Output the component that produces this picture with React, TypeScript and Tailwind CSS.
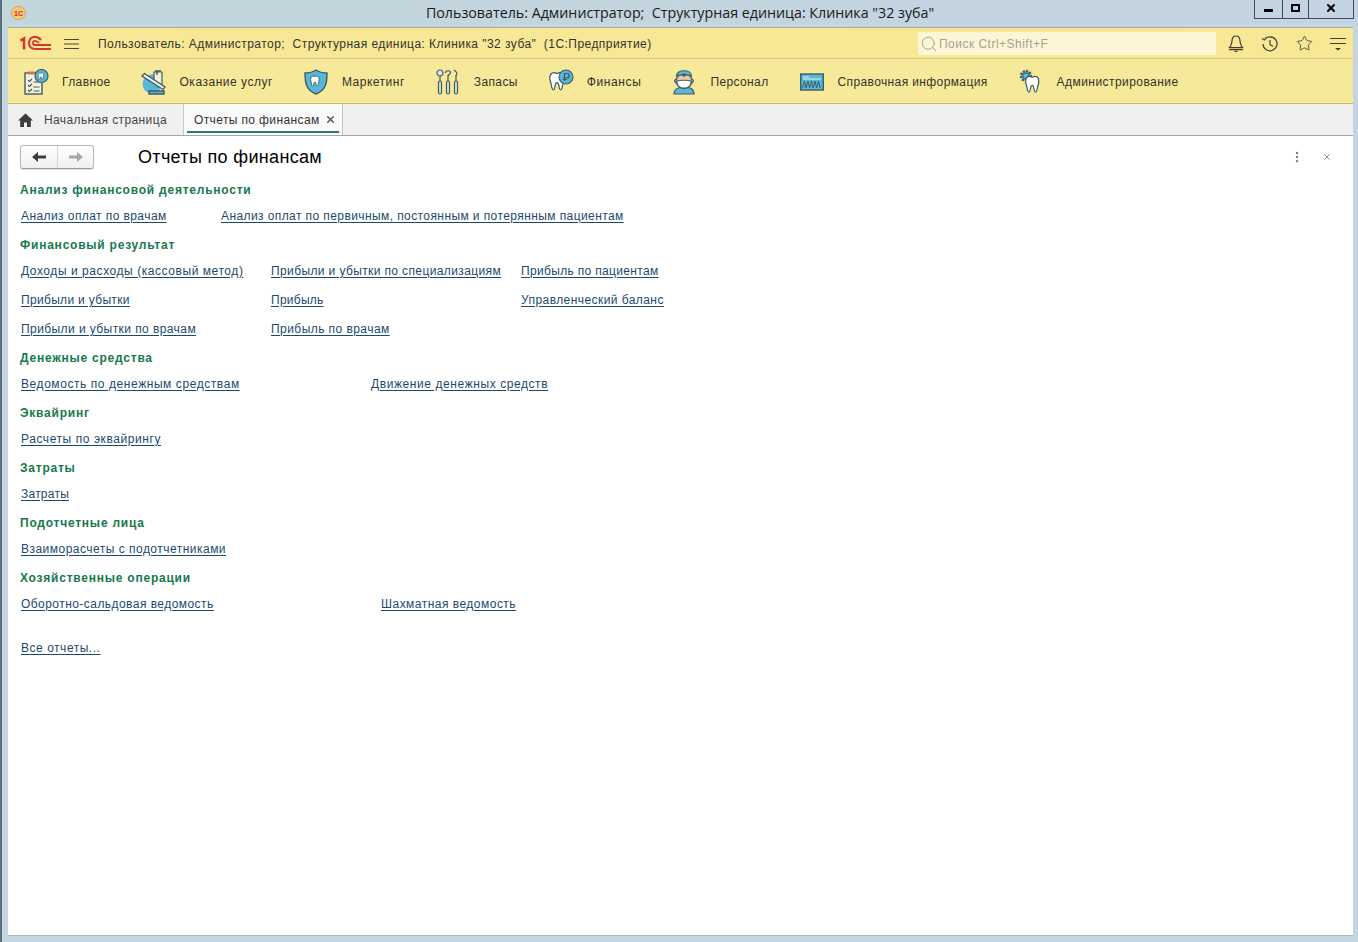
import React from 'react';
import { MoreVertical, Search, Star, X } from 'lucide-react';

const TOOTH =
  'M7 3c-3 0-5 2-5 6 0 3 1 4 1.500 7 .4 2.500 1 6 2.500 6s1.500-3 2-5c.3-1.500 1-3 2-3s1.700 1.500 2 3c.5 2 .5 5 2 5s2.100-3.500 2.500-6c.5-3 1.500-4 1.500-7 0-4-2-6-5-6-1.500 0-2 .8-3 .8S8.500 3 7 3z';
const DARK = '#3f5c63';
const BLUE = '#58b7d6';

const MainIcon = () => (
  <svg width="26" height="26" viewBox="0 0 26 26" fill="none">
    <rect x="2" y="4" width="17" height="21" fill="#f6f1dc" stroke={DARK} strokeWidth="1.400" />
    <rect x="5" y="2.500" width="7" height="3" fill="#c9736b" />
    <path d="M5 11l1.500 1.500L9 10M5 16l1.500 1.500L9 15M5 21l1.500 1.500L9 20" stroke={DARK} strokeWidth="1.100" />
    <path d="M10.500 13h6M10.500 18h6M10.500 22h6" stroke={DARK} strokeWidth="1.200" />
    <circle cx="18.500" cy="7" r="6.500" fill={BLUE} stroke={DARK} strokeWidth="1.200" />
    <path d={TOOTH} transform="translate(14.500 3) scale(.34)" fill="#fff" stroke={DARK} strokeWidth="2" />
  </svg>
);

const ChairIcon = () => (
  <svg width="26" height="26" viewBox="0 0 26 26" fill="none">
    <circle cx="11" cy="15" r="9.500" fill={BLUE} />
    <path d="M13 3h8v15l-4 0-4-8z" fill="#f4f0dc" stroke={DARK} strokeWidth="1.200" />
    <path d="M14 2h6M16 2v4" stroke={DARK} strokeWidth="1.400" />
    <path d="M1 7l2.500-2.500L24 18l-2 2.500z" fill="#eaf1ea" stroke={DARK} strokeWidth="1.300" />
    <path d="M8 22h15v3H8z" fill={BLUE} stroke={DARK} strokeWidth="1.400" />
  </svg>
);

const ShieldIcon = () => (
  <svg width="24" height="26" viewBox="0 0 24 26" fill="none">
    <path d="M12 1c3 2 6 3 11 3 0 10-1 17-11 21C2 21 1 14 1 4c5 0 8-1 11-3z" fill={BLUE} stroke={DARK} strokeWidth="1.400" />
    <path d={TOOTH} transform="translate(5.500 5.500) scale(.54)" fill="#fff" stroke={DARK} strokeWidth="1.800" />
  </svg>
);

const ToolsIcon = () => (
  <svg width="24" height="26" viewBox="0 0 24 26" fill="none">
    <circle cx="4" cy="4" r="3" fill="#d8eef5" stroke={DARK} strokeWidth="1.200" />
    <path d="M4 7v5M12 6v6M20 6v6" stroke={DARK} strokeWidth="1.200" />
    <path d="M9.500 4c0-3 5-3 5 0 0 1-2 1.500-2.500 3M18 1c1 1 3 2 3 3.500 0 1-1 1.500-1 2.500" stroke={DARK} strokeWidth="1.200" />
    <rect x="2.500" y="12" width="3" height="13" rx="1.500" fill="#dfe6d9" stroke={DARK} strokeWidth="1.200" />
    <rect x="10.500" y="12" width="3" height="13" rx="1.500" fill="#dfe6d9" stroke={DARK} strokeWidth="1.200" />
    <rect x="18.500" y="12" width="3" height="13" rx="1.500" fill="#dfe6d9" stroke={DARK} strokeWidth="1.200" />
  </svg>
);

const FinanceIcon = () => (
  <svg width="26" height="26" viewBox="0 0 26 26" fill="none">
    <path d={TOOTH} transform="translate(0 1) scale(.9)" fill="#fff" stroke={DARK} strokeWidth="1.400" />
    <circle cx="18" cy="8" r="7" fill={BLUE} stroke={DARK} strokeWidth="1.100" />
    <path d="M16.500 12V4.500h2.500a2 2 0 010 4.500h-4M14.800 10.500h4" stroke={DARK} strokeWidth="1.200" />
  </svg>
);

const DoctorIcon = () => (
  <svg width="24" height="26" viewBox="0 0 24 26" fill="none">
    <path d="M2 25c0-5 4-7 10-7s10 2 10 7z" fill={BLUE} stroke={DARK} strokeWidth="1.200" />
    <circle cx="4.500" cy="12" r="2" fill="#eac9a0" stroke={DARK} />
    <circle cx="19.500" cy="12" r="2" fill="#eac9a0" stroke={DARK} />
    <ellipse cx="12" cy="12" rx="8" ry="7.500" fill="#eac9a0" stroke={DARK} strokeWidth="1.200" />
    <path d="M4.500 7c0-7 15-7 15 0-4-1.500-11-1.500-15 0z" fill={BLUE} stroke={DARK} strokeWidth="1.200" />
    <circle cx="12" cy="6" r="1.800" fill={DARK} />
    <path d="M5 12c3-1 11-1 14 0 0 5-3 7-7 7s-7-2-7-7z" fill="#fff" stroke={DARK} />
  </svg>
);

const MonitorIcon = () => (
  <svg width="24" height="26" viewBox="0 0 24 26" fill="none">
    <rect x=".700" y="5" width="22.600" height="16" fill={BLUE} stroke={DARK} strokeWidth="1.400" />
    <path d="M3 8h6M3 10h18" stroke="#fff" strokeWidth=".8" />
    <path d="M2.500 19l2-7 1.500 7 2-7 1.500 7 2-7 1.500 7 2-7 1.500 7 2-7 1.500 7" stroke={DARK} strokeWidth="1" />
  </svg>
);

const AdminIcon = () => (
  <svg width="24" height="26" viewBox="0 0 24 26" fill="none">
    <circle cx="7" cy="7" r="5" fill={BLUE} stroke={DARK} strokeWidth="2.400" strokeDasharray="2 1.300" />
    <circle cx="7" cy="7" r="3.200" fill={BLUE} stroke={DARK} strokeWidth="1" />
    <path d={TOOTH} transform="translate(5 5) scale(.82)" fill="#fff" stroke={DARK} strokeWidth="1.500" />
  </svg>
);

const HomeIcon = () => (
  <svg width="15" height="14" viewBox="0 0 15 14" fill="#3c3c3c">
    <path d="M7.500 .5L0 7.500h2.200V14h3.800V9.500h3V14h3.800V7.500H15z" />
  </svg>
);

const sections = [
  { label: 'Главное', icon: <MainIcon />, track: 'tracking-[0.38px]' },
  { label: 'Оказание услуг', icon: <ChairIcon />, track: 'tracking-[0.52px]' },
  { label: 'Маркетинг', icon: <ShieldIcon />, track: 'tracking-[0.5px]' },
  { label: 'Запасы', icon: <ToolsIcon />, track: 'tracking-[0.38px]' },
  { label: 'Финансы', icon: <FinanceIcon />, track: 'tracking-[0.6px]' },
  { label: 'Персонал', icon: <DoctorIcon />, track: 'tracking-[0.38px]' },
  { label: 'Справочная информация', icon: <MonitorIcon />, track: 'tracking-[0.38px]' },
  { label: 'Администрирование', icon: <AdminIcon />, track: 'tracking-[0.44px]' },
];

const groups = [
  {
    title: 'Анализ финансовой деятельности',
    col: 'grid-cols-[200px_1fr]',
    links: [
      { text: 'Анализ оплат по врачам', track: 'tracking-[0.42px]' },
      { text: 'Анализ оплат по первичным, постоянным и потерянным пациентам', track: 'tracking-[0.41px]' },
    ],
  },
  {
    title: 'Финансовый результат',
    col: 'grid-cols-[250px_250px_1fr]',
    links: [
      { text: 'Доходы и расходы (кассовый метод)', track: 'tracking-[0.56px]' },
      { text: 'Прибыли и убытки по специализациям', track: 'tracking-[0.38px]' },
      { text: 'Прибыль по пациентам', track: 'tracking-[0.33px]' },
      { text: 'Прибыли и убытки', track: 'tracking-[0.32px]' },
      { text: 'Прибыль', track: 'tracking-[0.26px]' },
      { text: 'Управленческий баланс', track: 'tracking-[0.43px]' },
      { text: 'Прибыли и убытки по врачам', track: 'tracking-[0.42px]' },
      { text: 'Прибыль по врачам', track: 'tracking-[0.44px]' },
    ],
  },
  {
    title: 'Денежные средства',
    col: 'grid-cols-[350px_1fr]',
    links: [
      { text: 'Ведомость по денежным средствам', track: 'tracking-[0.57px]' },
      { text: 'Движение денежных средств', track: 'tracking-[0.58px]' },
    ],
  },
  { title: 'Эквайринг', col: 'grid-cols-1', links: [{ text: 'Расчеты по эквайрингу', track: 'tracking-[0.57px]' }] },
  { title: 'Затраты', col: 'grid-cols-1', links: [{ text: 'Затраты', track: 'tracking-[0.24px]' }] },
  { title: 'Подотчетные лица', col: 'grid-cols-1', links: [{ text: 'Взаиморасчеты с подотчетниками', track: 'tracking-[0.48px]' }] },
  {
    title: 'Хозяйственные операции',
    col: 'grid-cols-[360px_1fr]',
    links: [
      { text: 'Оборотно-сальдовая ведомость', track: 'tracking-[0.45px]' },
      { text: 'Шахматная ведомость', track: 'tracking-[0.48px]' },
    ],
  },
];

const ReportLink = ({ text, track }: { text: string; track: string }) => (
  <div className="h-[29px] flex items-center">
    <a className={`text-[12px] leading-[14px] text-[#1c4a6e] underline underline-offset-2 decoration-[#1c4a6e] ${track}`}>{text}</a>
  </div>
);

export default function App() {
  return (
    <div className="h-[942px] w-[1358px] overflow-hidden flex flex-col bg-[#c3d5de] font-['Liberation_Sans',Arial,sans-serif] border-l-2 border-[#5c6f7c]">
      {/* window title */}
      <div className="relative h-[27px] shrink-0 flex items-center justify-center bg-gradient-to-r from-[#c2d6dc] to-[#c4d4e2]">
        <div className="absolute left-[9px] top-[6px] w-[15px] h-[14px] rounded-full bg-[#f5c979] border border-[#cfa869] flex items-center justify-center">
          <span className="text-[7px] leading-none font-bold text-[#c9301f]">1С</span>
        </div>
        <span className="text-[14.25px] leading-[24px] text-[#1a1a1a] font-['Open_Sans',sans-serif] whitespace-pre pb-[2px]">
          Пользователь: Администратор;  Структурная единица: Клиника "32 зуба"
        </span>
        <div className="absolute right-[4px] top-0 h-[19px] flex border border-t-0 border-[#3f4c58]">
          <div className="w-[28px] flex items-center justify-center border-r border-[#3f4c58]">
            <div className="w-[9px] h-[3px] mt-[3px] bg-black" />
          </div>
          <div className="w-[26px] flex items-center justify-center border-r border-[#3f4c58]">
            <div className="w-[9px] h-[8px] -mt-[3px] border-2 border-black" />
          </div>
          <div className="w-[44px] flex items-center justify-center">
            <X size={12} strokeWidth={4} className="text-black -mt-[3px]" />
          </div>
        </div>
      </div>

      <div className="flex-1 flex flex-col ml-[6px] mr-[5px] mb-[6px] min-h-0 border-t border-[#a3b09f]">
        {/* top panel */}
        <div className="h-[31px] shrink-0 flex items-center bg-[#f8e896] border-b border-[#d8cd8c] pl-[12px] pr-[7px] pt-[1px]">
          <svg width="32" height="18" viewBox="0 0 32 18" fill="none" className="shrink-0">
            <path d="M.500 5.500L4 3.500V14.500" stroke="#d4392c" strokeWidth="2.600" />
            <path d="M21 5c-1.500-2-3.500-3.200-6-3.200-3.500 0-6 2.700-6 6.200s2.500 6 6 6h16" stroke="#d4392c" strokeWidth="2.200" />
            <path d="M19 8c-1-1.500-2.500-2.200-4-2.200-1.200 0-2 1-2 2.200s1 2 2 2h16" stroke="#d4392c" strokeWidth="1.800" />
          </svg>
          <svg width="15" height="12" viewBox="0 0 15 12" className="ml-[12px] shrink-0">
            <path d="M0 1.500h15M0 6h15M0 10.500h15" stroke="#4a4a3a" strokeWidth="1.100" />
          </svg>
          <span className="ml-[19px] text-[12px] tracking-[0.45px] text-[#333] whitespace-pre">
            Пользователь: Администратор;  Структурная единица: Клиника "32 зуба"  (1С:Предприятие)
          </span>
          <div className="ml-auto w-[298px] h-[23px] bg-[#fdf6d6] flex items-center pl-[2px]">
            <Search size={18} strokeWidth={1.200} className="text-[#9a9a8c]" />
            <span className="ml-[1px] text-[12px] tracking-[0.48px] text-[#a5a293]">Поиск Ctrl+Shift+F</span>
          </div>
          <div className="flex ml-[8px] w-[122px] justify-between text-[#3f3f30] pl-[4px]">
            <svg width="16" height="17" viewBox="0 0 16 17" fill="none" stroke="currentColor" strokeWidth="1.200">
              <path d="M8 1c-3 0-4 2.500-4 5 0 3.500-1.500 5-2.500 6.500h13C13.500 11 12 9.500 12 6c0-2.500-1-5-4-5z" />
              <path d="M1 14.500h14" strokeWidth="1.500" />
              <path d="M6.500 16.300h3" strokeWidth="1.300" />
            </svg>
            <svg width="18" height="18" viewBox="0 0 18 18" fill="none" stroke="currentColor" strokeWidth="1.200">
              <path d="M3.500 4.500A7 7 0 112 9M1 3.500l2.500 1.500 1.500-2.500M9 5v4.500l3 2" />
            </svg>
            <Star size={17} strokeWidth={1.200} />
            <svg width="16" height="16" viewBox="0 0 16 16" className="mt-[1px]">
              <path d="M0 2.500h16M0 7.500h16" stroke="currentColor" strokeWidth="1.100" />
              <path d="M5 12h6l-3 2.500z" fill="currentColor" />
            </svg>
          </div>
        </div>

        {/* sections */}
        <div className="h-[45px] shrink-0 flex items-center gap-[30px] pl-[15px] pt-[2px] bg-[#f7e99a] border-b border-[#c4b978]">
          {sections.map(s => (
            <div key={s.label} className="flex items-center">
              <div className="w-[26px] mr-[13px] flex justify-center">{s.icon}</div>
              <span className={`text-[12px] text-[#33332b] whitespace-nowrap ${s.track}`}>{s.label}</span>
            </div>
          ))}
        </div>

        {/* tabs */}
        <div className="h-[32px] shrink-0 flex bg-[#f0f0f0] border-b border-[#a6a6a6]">
          <div className="w-[175px] flex items-center pl-[10px]">
            <HomeIcon />
            <span className="ml-[11px] text-[12px] tracking-[0.38px] text-[#444]">Начальная страница</span>
          </div>
          <div className="relative w-[160px] flex items-center pl-[10px] bg-[#fafafa] border-x border-[#c8c8c8]">
            <span className="text-[12px] tracking-[0.38px] text-[#333]">Отчеты по финансам</span>
            <X size={11} strokeWidth={3} className="ml-[5px] text-[#555]" />
            <div className="absolute left-[3px] right-[3px] bottom-[2px] h-[2px] bg-[#2b7f56]" />
          </div>
        </div>

        {/* content */}
        <div className="flex-1 min-h-0 bg-white pl-[12px] pr-[14px] border-b border-[#a7b7b5]">
          <div className="h-[42px] flex items-center pt-[1px] pb-[1px]">
            <div className="w-[74px] h-[24px] flex rounded-[3px] border border-[#b8b8b8] border-b-[#9a9a9a] bg-gradient-to-b from-white to-[#f0f0f0] shadow-[0_1px_1px_rgba(0,0,0,0.12)]">
              <div className="w-[37px] flex items-center justify-center border-r border-[#d4d4d4]">
                <svg width="14" height="10" viewBox="0 0 14 10" fill="#3c3c3c">
                  <path d="M0 5l6-5v3.500h8v3H6V10z" />
                </svg>
              </div>
              <div className="flex-1 flex items-center justify-center">
                <svg width="14" height="10" viewBox="0 0 14 10" fill="#a8a8a8">
                  <path d="M14 5L8 0v3.500H0v3h8V10z" />
                </svg>
              </div>
            </div>
            <h1 className="ml-[44px] text-[18px] leading-[22px] tracking-[0.33px] text-black whitespace-nowrap">Отчеты по финансам</h1>
            <div className="ml-auto flex items-center gap-[18px] pr-[7px]">
              <MoreVertical size={14} strokeWidth={2} className="text-[#777]" />
              <X size={10} strokeWidth={1.500} className="text-[#555]" />
            </div>
          </div>

          {groups.map(g => (
            <div key={g.title} className="mb-[3px]">
              <div className="h-[23px] pt-[1px] flex items-center text-[12px] font-bold tracking-[0.77px] text-[#16794c] whitespace-nowrap">{g.title}</div>
              <div className={`grid pl-[1px] ${g.col}`}>
                {g.links.map(l => (
                  <ReportLink key={l.text} text={l.text} track={l.track} />
                ))}
              </div>
            </div>
          ))}

          <div className="pl-[1px] mt-[15px]">
            <ReportLink text="Все отчеты..." track="tracking-[0.53px]" />
          </div>
        </div>
      </div>
    </div>
  );
}
